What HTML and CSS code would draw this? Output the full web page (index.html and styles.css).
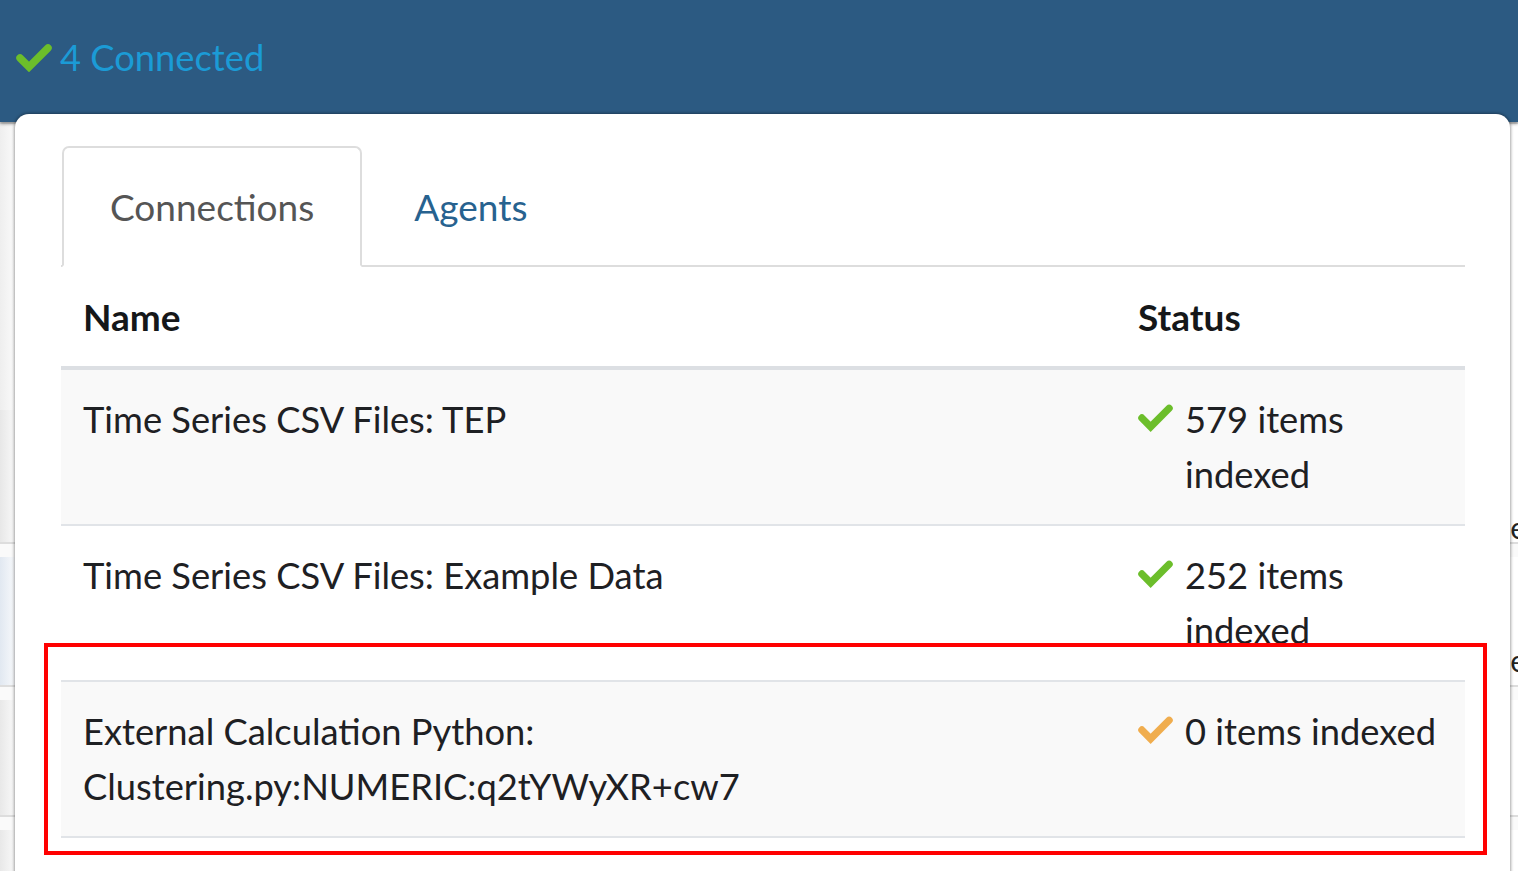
FILE: index.html
```html
<!DOCTYPE html>
<html lang="en">
<head>
<meta charset="utf-8">
<title>Connections</title>
<link rel="stylesheet" href="styles.css">
</head>
<body>
<div class="page">
  <header class="navbar">
    <span class="nav-status">
      <svg class="check check-nav" viewBox="0 0 36 30" aria-hidden="true"><polyline points="4,16 13,25 32,6"/></svg>
      <span class="nav-text">4 Connected</span>
    </span>
  </header>
  <div class="bg-rows">
    <div class="bg-row bg-a"></div>
    <div class="bg-row bg-b"><span class="bg-cell">e</span></div>
    <div class="bg-row bg-sep"></div>
    <div class="bg-row bg-c"><span class="bg-cell">e</span></div>
    <div class="bg-row bg-sep"></div>
    <div class="bg-row bg-d"></div>
    <div class="bg-row bg-sep"></div>
    <div class="bg-row bg-e"></div>
  </div>
</div>

<div class="popup">
  <ul class="tabs">
    <li class="tab active">Connections</li>
    <li class="tab">Agents</li>
  </ul>
  <table class="conn-table">
    <thead>
      <tr>
        <th class="col-name">Name</th>
        <th class="col-status">Status</th>
      </tr>
    </thead>
    <tbody>
      <tr class="striped">
        <td>Time Series CSV Files: TEP</td>
        <td>
          <div class="status">
            <svg class="check ok" viewBox="0 0 36 30" aria-hidden="true"><polyline points="4,16 13,25 32,6"/></svg>
            <span class="status-text">579 items indexed</span>
          </div>
        </td>
      </tr>
      <tr>
        <td>Time Series CSV Files: Example Data</td>
        <td>
          <div class="status">
            <svg class="check ok" viewBox="0 0 36 30" aria-hidden="true"><polyline points="4,16 13,25 32,6"/></svg>
            <span class="status-text">252 items indexed</span>
          </div>
        </td>
      </tr>
      <tr class="striped">
        <td>External Calculation Python: Clustering.py:NUMERIC:q2tYWyXR+cw7</td>
        <td>
          <div class="status">
            <svg class="check warn" viewBox="0 0 36 30" aria-hidden="true"><polyline points="4,16 13,25 32,6"/></svg>
            <span class="status-text">0 items indexed</span>
          </div>
        </td>
      </tr>
    </tbody>
  </table>
</div>

<div class="highlight"></div>
</body>
</html>
```

FILE: styles.css
```css
html, body {
  margin: 0;
  padding: 0;
  height: 100%;
  overflow: hidden;
}

body {
  font-family: "Lato", "Liberation Sans", sans-serif;
  font-size: 36.3px;
  line-height: 55px;
  color: #1e2023;
  background: #ffffff;
}

.page {
  display: flex;
  flex-direction: column;
  height: 100%;
}

.navbar {
  height: 122px;
  flex: none;
  background: #2c5a82;
  padding: 30px 0 0 16px;
  box-sizing: border-box;
  box-shadow: 0 2px 3px rgba(0, 0, 0, 0.35);
  position: relative;
  z-index: 1;
}

.nav-status {
  display: flex;
  align-items: center;
  gap: 8px;
}

.nav-text {
  color: #1b9bd6;
}

.check {
  fill: none;
  stroke-width: 7.5;
  stroke-linecap: round;
  stroke-linejoin: miter;
  flex: none;
}

.check-nav {
  width: 36px;
  height: 30px;
  stroke: #6cbe2b;
  margin-top: -2px;
}

.bg-rows {
  flex: 1;
  display: flex;
  flex-direction: column;
}

.bg-row {
  display: flex;
  justify-content: flex-end;
  align-items: flex-end;
  font-size: 30px;
  line-height: 30px;
  color: #222;
  white-space: nowrap;
  overflow: hidden;
  box-sizing: border-box;
}

.bg-cell {
  margin-right: -8px;
}

.bg-a { height: 288px; background: linear-gradient(to right, #eeeeee, #ffffff 20px); border-top: 2px solid #dddddd; }
.bg-b { height: 132px; background: linear-gradient(to right, #e7e7e7, #ffffff 20px); }
.bg-sep { height: 15px; background: #fafafa; border-top: 2px solid #dddddd; }
.bg-c { height: 128px; background: linear-gradient(to right, #e1e8f1, #ffffff 20px); padding-bottom: 10px; }
.bg-d { height: 115px; background: linear-gradient(to right, #e8e8e8, #ffffff 20px); }
.bg-e { flex: 1; background: linear-gradient(to right, #e8e8e8, #ffffff 20px); }

.popup {
  position: absolute;
  left: 15px;
  top: 114px;
  width: 1495px;
  height: 820px;
  box-sizing: border-box;
  background: #ffffff;
  border-radius: 14px 14px 0 0;
  box-shadow: 0 0 3px 1px rgba(0, 0, 0, 0.35);
  padding: 32px 45px 0 46px;
  z-index: 2;
}

.tabs {
  list-style: none;
  margin: 0;
  padding: 0 0 0 1px;
  display: flex;
  border-bottom: 2px solid #dddddd;
  font-size: 37px;
}

.tab {
  padding: 31px 46px;
  border: 2px solid transparent;
  border-radius: 7px 7px 0 0;
  margin-bottom: -2px;
  margin-right: 4px;
  color: #27628f;
}

.tab.active {
  color: #555555;
  border-color: #dddddd;
  border-bottom-color: #ffffff;
  background: #ffffff;
}

.conn-table {
  width: 100%;
  border-collapse: collapse;
  border-spacing: 0;
}

.conn-table th,
.conn-table td {
  padding: 22px;
  text-align: left;
  vertical-align: top;
}

.conn-table th {
  font-size: 37px;
  font-weight: 700;
  color: #151719;
  border-bottom: 4px solid #dcdfe3;
}

.conn-table td {
  border-bottom: 2px solid #e1e4e8;
}

.col-status {
  width: 305px;
}

.striped td {
  background: #f9f9f9;
}

.status {
  display: flex;
  align-items: flex-start;
  gap: 12px;
}

.status .check {
  width: 35px;
  height: 30px;
  margin-top: 10px;
}

.check.ok { stroke: #6cbe2b; }
.check.warn { stroke: #f0ad4e; }

.highlight {
  position: absolute;
  left: 44px;
  top: 643px;
  width: 1443px;
  height: 212px;
  box-sizing: border-box;
  border: 4px solid #ff0000;
  z-index: 3;
  pointer-events: none;
}
```
